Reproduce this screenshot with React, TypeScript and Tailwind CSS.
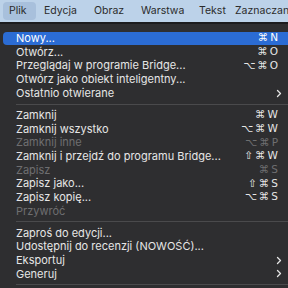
type Item =
  | { sep: true }
  | {
      sep?: false;
      label: string;
      shortcut?: string;
      disabled?: boolean;
      submenu?: boolean;
      active?: boolean;
    };

const items: Item[] = [
  { label: "Nowy...", shortcut: "⌘N", active: true },
  { label: "Otwórz...", shortcut: "⌘O" },
  { label: "Przeglądaj w programie Bridge...", shortcut: "⌥⌘O" },
  { label: "Otwórz jako obiekt inteligentny..." },
  { label: "Ostatnio otwierane", submenu: true },
  { sep: true },
  { label: "Zamknij", shortcut: "⌘W" },
  { label: "Zamknij wszystko", shortcut: "⌥⌘W" },
  { label: "Zamknij inne", shortcut: "⌥⌘P", disabled: true },
  { label: "Zamknij i przejdź do programu Bridge...", shortcut: "⇧⌘W" },
  { label: "Zapisz", shortcut: "⌘S", disabled: true },
  { label: "Zapisz jako...", shortcut: "⇧⌘S" },
  { label: "Zapisz kopię...", shortcut: "⌥⌘S" },
  { label: "Przywróć", disabled: true },
  { sep: true },
  { label: "Zaproś do edycji..." },
  { label: "Udostępnij do recenzji (NOWOŚĆ)..." },
  { label: "Eksportuj", submenu: true },
  { label: "Generuj", submenu: true },
  { sep: true },
];

// menu bar titles; box classes keep each title where the screenshot has it
const menus = [
  { label: "Plik", cls: "w-[33px] pl-[6px] rounded-[4px] bg-[#a8c0dc]" },
  { label: "Edycja", cls: "w-[50px] pl-[8px]" },
  { label: "Obraz", cls: "w-[47px] pl-[8px]" },
  { label: "Warstwa", cls: "w-[58px] pl-[8px]" },
  { label: "Tekst", cls: "w-[36px] pl-[8px]" },
  { label: "Zaznaczanie", cls: "pl-[8px]" },
];

function Chevron() {
  return (
    <svg className="-mr-[4px]" width="6" height="9" viewBox="0 0 6 9" fill="none" stroke="currentColor" strokeWidth="1.3" strokeLinecap="round" strokeLinejoin="round">
      <path d="M1.5 1.5 4.5 4.5 1.5 7.5" />
    </svg>
  );
}

function Shortcut({ keys }: { keys: string }) {
  const chars = Array.from(keys);
  return (
    <span className="flex items-center gap-[2px] font-['DejaVu_Sans',sans-serif] text-[10.5px]">
      {chars.map((c, i) => (
        <span key={i}>{c}</span>
      ))}
    </span>
  );
}

export default function App() {
  return (
    <div className="w-[288px] h-[288px] overflow-hidden bg-[#2e2e30] font-['Inter',sans-serif] select-none">
      <div className="h-[22px] bg-[#bcd2e9] flex items-center pl-[3px] text-[10.5px] text-[#2b2b2b] whitespace-nowrap">
        {menus.map((m) => (
          <div key={m.label} className={`h-[18px] shrink-0 flex items-center ${m.cls}`}>
            {m.label}
          </div>
        ))}
      </div>
      <div className="h-[2px] bg-[#1c1c1e]" />
      <div className="pt-[7.5px] pl-[3px] text-[11px] text-[#e6e6e6]">
        {items.map((it, i) =>
          it.sep ? (
            <div key={i} className="h-[8.3px] flex items-center pl-[13px]">
              <div className="h-px w-full bg-[#4a4a4c]" />
            </div>
          ) : (
            <div
              key={i}
              className={`h-[13.7px] flex items-center pl-[13px] pr-[10px] rounded-l-[4px] whitespace-nowrap ${
                it.active ? "bg-[#2b6cd4] text-white" : ""
              } ${it.disabled ? "text-[#6e6e70]" : ""}`}
            >
              <span className="flex-1">{it.label}</span>
              {it.shortcut && <Shortcut keys={it.shortcut} />}
              {it.submenu && <Chevron />}
            </div>
          )
        )}
      </div>
    </div>
  );
}
